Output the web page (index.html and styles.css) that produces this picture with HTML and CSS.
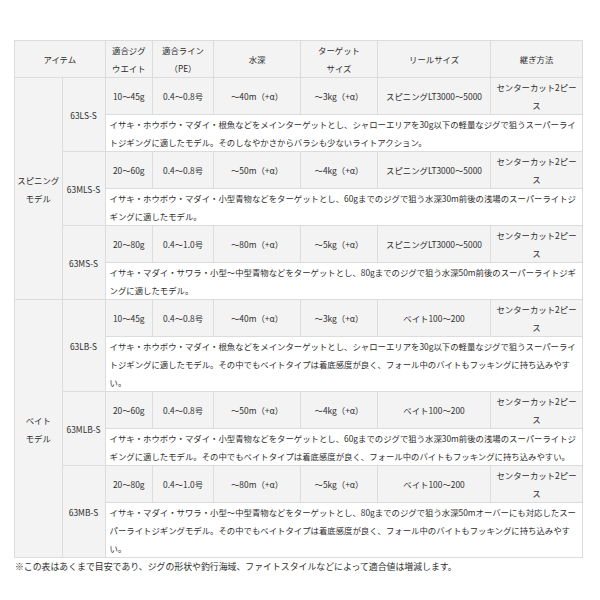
FILE: index.html
```html
<!DOCTYPE html>
<html lang="ja">
<head>
<meta charset="utf-8">
<title>スペック表</title>
<link rel="stylesheet" href="styles.css">
</head>
<body>
<div class="page">
  <table class="spec">
    <colgroup>
      <col class="c-group"><col class="c-model"><col class="c-jig"><col class="c-line"><col class="c-depth"><col class="c-target"><col class="c-reel"><col class="c-joint">
    </colgroup>
    <thead>
      <tr>
        <th colspan="2">アイテム</th>
        <th>適合ジグウエイト</th>
        <th>適合ライン（PE）</th>
        <th>水深</th>
        <th>ターゲット<br>サイズ</th>
        <th>リールサイズ</th>
        <th>継ぎ方法</th>
      </tr>
    </thead>
    <tbody>
      <tr>
        <td class="group" rowspan="6">スピニング<br>モデル</td>
        <td class="model" rowspan="2">63LS-S</td>
        <td>10〜45g</td><td>0.4〜0.8号</td><td>〜40m（+α）</td><td>〜3kg（+α）</td><td>スピニングLT3000〜5000</td><td>センターカット2ピース</td>
      </tr>
      <tr><td class="desc" colspan="6">イサキ・ホウボウ・マダイ・根魚などをメインターゲットとし、シャローエリアを30g以下の軽量なジグで狙うスーパーライトジギングに適したモデル。そのしなやかさからバラシも少ないライトアクション。</td></tr>
      <tr>
        <td class="model" rowspan="2">63MLS-S</td>
        <td>20〜60g</td><td>0.4〜0.8号</td><td>〜50m（+α）</td><td>〜4kg（+α）</td><td>スピニングLT3000〜5000</td><td>センターカット2ピース</td>
      </tr>
      <tr><td class="desc" colspan="6">イサキ・ホウボウ・マダイ・小型青物などをターゲットとし、60gまでのジグで狙う水深30m前後の浅場のスーパーライトジギングに適したモデル。</td></tr>
      <tr>
        <td class="model" rowspan="2">63MS-S</td>
        <td>20〜80g</td><td>0.4〜1.0号</td><td>〜80m（+α）</td><td>〜5kg（+α）</td><td>スピニングLT3000〜5000</td><td>センターカット2ピース</td>
      </tr>
      <tr><td class="desc" colspan="6">イサキ・マダイ・サワラ・小型〜中型青物などをターゲットとし、80gまでのジグで狙う水深50m前後のスーパーライトジギングに適したモデル。</td></tr>
      <tr>
        <td class="group" rowspan="6">ベイト<br>モデル</td>
        <td class="model" rowspan="2">63LB-S</td>
        <td>10〜45g</td><td>0.4〜0.8号</td><td>〜40m（+α）</td><td>〜3kg（+α）</td><td>ベイト100〜200</td><td>センターカット2ピース</td>
      </tr>
      <tr><td class="desc" colspan="6">イサキ・ホウボウ・マダイ・根魚などをメインターゲットとし、シャローエリアを30g以下の軽量なジグで狙うスーパーライトジギングに適したモデル。その中でもベイトタイプは着底感度が良く、フォール中のバイトもフッキングに持ち込みやすい。</td></tr>
      <tr>
        <td class="model" rowspan="2">63MLB-S</td>
        <td>20〜60g</td><td>0.4〜0.8号</td><td>〜50m（+α）</td><td>〜4kg（+α）</td><td>ベイト100〜200</td><td>センターカット2ピース</td>
      </tr>
      <tr><td class="desc" colspan="6">イサキ・ホウボウ・マダイ・小型青物などをターゲットとし、60gまでのジグで狙う水深30m前後の浅場のスーパーライトジギングに適したモデル。その中でもベイトタイプは着底感度が良く、フォール中のバイトもフッキングに持ち込みやすい。</td></tr>
      <tr>
        <td class="model" rowspan="2">63MB-S</td>
        <td>20〜80g</td><td>0.4〜1.0号</td><td>〜80m（+α）</td><td>〜5kg（+α）</td><td>ベイト100〜200</td><td>センターカット2ピース</td>
      </tr>
      <tr><td class="desc" colspan="6">イサキ・マダイ・サワラ・小型〜中型青物などをターゲットとし、80gまでのジグで狙う水深50mオーバーにも対応したスーパーライトジギングモデル。その中でもベイトタイプは着底感度が良く、フォール中のバイトもフッキングに持ち込みやすい。</td></tr>
    </tbody>
  </table>
  <p class="note">※この表はあくまで目安であり、ジグの形状や釣行海域、ファイトスタイルなどによって適合値は増減します。</p>
</div>
</body>
</html>
```
FILE: styles.css
```css
html, body {
  margin: 0;
  padding: 0;
  background: #fff;
}

.page {
  padding: 40px 0 0 14px;
  font-family: "Noto Sans CJK JP", "Noto Sans", sans-serif;
  font-size: 8.4px;
  line-height: 18px;
  color: #2e2e2e;
}

.spec {
  width: 568px;
  table-layout: fixed;
  border-collapse: collapse;
}

.c-group { width: 47.5px; }
.c-model { width: 43px; }
.c-jig { width: 47.5px; }
.c-line { width: 61px; }
.c-depth { width: 87px; }
.c-target { width: 77px; }
.c-reel { width: 113px; }
.c-joint { width: 92px; }

.spec th,
.spec td {
  border: 1px solid #dcdcdc;
  padding: 0 3px;
  background: #f3f3f3;
  text-align: center;
  vertical-align: middle;
  font-weight: normal;
}

.spec td.group {
  padding: 0;
  white-space: nowrap;
}

.spec td.desc {
  background: #fff;
  text-align: left;
  padding: 0 4px;
}

.note {
  margin: 0 0 0 1px;
  font-size: 8.9px;
}
```
